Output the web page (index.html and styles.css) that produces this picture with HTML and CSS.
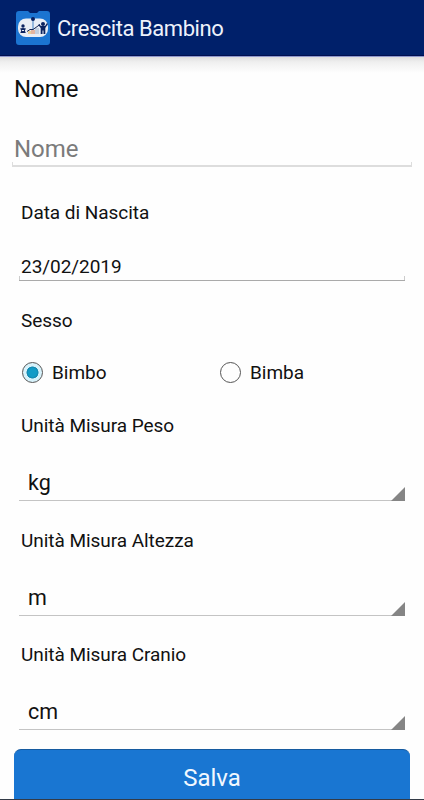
FILE: index.html
```
<!DOCTYPE html>
<html lang="it">
<head>
<meta charset="utf-8">
<title>Crescita Bambino</title>
<link rel="stylesheet" href="styles.css">
</head>
<body>
<div class="screen">
  <header class="bar">
    <svg class="logo" width="34" height="34" viewBox="0 0 34 34">
      <path d="M3 0H12L14 2H21L23 0H31Q34 0 34 3V31Q34 34 31 34H3Q0 34 0 31V3Q0 0 3 0Z" fill="#1b74d1"/>
      <rect x="2" y="7.500" width="30" height="18.500" rx="8" fill="#e9edf5"/>
      <path d="M12 20h3v3h-3z" fill="#e9cf9b"/>
      <path d="M15 19h4v4h-4z" fill="#e5b5a0"/>
      <path d="M19 17h4v6h-4z" fill="#c5d0e0"/>
      <path d="M17 8v11" stroke="#4482c4" stroke-width="1"/>
      <circle cx="17" cy="8" r="2" fill="#071f60"/>
      <path d="M11 20.500L14 18.500L17 18.500L24 13.500" stroke="#162653" stroke-width="1" fill="none"/>
      <g fill="#0c2360">
        <circle cx="7" cy="15" r="1.700"/>
        <path d="M4 17.500L7 17L10 17.500L8.800 19.500L9.800 22H4.300L5.300 19.500Z"/>
        <circle cx="27" cy="13" r="2"/>
        <path d="M23 13L25 15H29L31 12L32 13L29.300 17V23H27.500V19.500H26.500V23H24.700V17L22.300 14Z"/>
      </g>
      <path d="M6 19.500h2" stroke="#e9edf5"/>
    </svg>
    <h1 class="title">Crescita Bambino</h1>
  </header>
  <main class="form">
    <div class="name-label">Nome</div>
    <div class="name-input">Nome</div>
    <div class="fields">
      <div class="label label-date">Data di Nascita</div>
      <div class="date-input">23/02/2019</div>
      <div class="label label-sex">Sesso</div>
      <div class="radios">
        <div class="radio"><span class="dot dot-on"></span>Bimbo</div>
        <div class="radio"><span class="dot"></span>Bimba</div>
      </div>
      <div class="label label-weight">Unità Misura Peso</div>
      <div class="select">kg<svg class="corner" width="14" height="14"><path d="M14 0V14H0Z"/></svg></div>
      <div class="label label-unit">Unità Misura Altezza</div>
      <div class="select">m<svg class="corner" width="14" height="14"><path d="M14 0V14H0Z"/></svg></div>
      <div class="label label-last">Unità Misura Cranio</div>
      <div class="select">cm<svg class="corner" width="14" height="14"><path d="M14 0V14H0Z"/></svg></div>
    </div>
    <div class="save">Salva</div>
  </main>
  <div class="edge"></div>
</div>
</body>
</html>
```
FILE: styles.css
```
* { box-sizing: border-box; }
body { margin: 0; background: #fefefe; color: #111; font-family: Roboto, sans-serif; }
.screen { display: flex; flex-direction: column; height: 800px; overflow: hidden; }
.bar {
  flex: none; display: flex; align-items: center; height: 57px; padding: 0 16px 1px;
  background: #00206a; border-bottom: 1px solid #8f98cc; box-shadow: inset 0 -1px #000f50;
}
.logo { flex: none; margin-top: 1px; }
.title { margin: 3px 0 0 7px; color: #eef2fb; font-size: 22px; font-weight: 400; line-height: 28px; letter-spacing: -.45px; }
.form { flex: 1; min-height: 0; background: linear-gradient(#dedede, #efefef 5px, #fefefe 16px); }
.name-label { height: 64px; padding-left: 14px; font-size: 24px; line-height: 64px; }
.name-input {
  height: 46px; margin: 0 12px; padding-left: 2px; color: #7b7b7b; font-size: 24px; line-height: 57px;
  background:
    linear-gradient(#ddd, #ddd) 0 100% / 100% 2px no-repeat,
    linear-gradient(#ddd, #ddd) 0 100% / 1px 5px no-repeat,
    linear-gradient(#ddd, #ddd) 100% 100% / 1px 5px no-repeat;
}
.fields { padding: 34px 19px 0; }
.label { height: 24px; padding-left: 2px; font-size: 19px; line-height: 24px; letter-spacing: -.05px; }
.date-input {
  height: 30px; margin-top: 26px; padding-left: 2px; font-size: 19px; line-height: 32px; letter-spacing: -.05px;
  background:
    linear-gradient(#aaa, #aaa) 0 100% / 100% 1px no-repeat,
    linear-gradient(#ccc, #ccc) 0 100% / 1px 5px no-repeat,
    linear-gradient(#ccc, #ccc) 100% 100% / 1px 5px no-repeat;
}
.label-sex { margin-top: 28px; }
.radios { display: grid; grid-template-columns: 198px 1fr; height: 40px; margin-top: 19px; padding-left: 3px; }
.radio { display: flex; align-items: center; gap: 9px; font-size: 19px; }
.dot { width: 21px; height: 21px; border: 1px solid #555; border-radius: 50%; }
.dot-on { background: radial-gradient(circle, #119bc7 0 4px, #1386ad 5.700px, #d7f2fb 6.300px); }
.label-weight { margin-top: 22px; }
.select {
  display: flex; justify-content: space-between; align-items: flex-end; height: 36px; margin-top: 27px;
  padding-left: 9px; border-bottom: 1px solid #c4c4c4; font-size: 21.5px; line-height: 34px;
}
.corner { flex: none; margin-bottom: -1px; fill: #858585; }
.label-unit { margin-top: 28px; }
.label-last { margin-top: 27px; }
.save {
  height: 60px; margin: 19px 14px 0; border-top: 1px solid #155a9f; border-radius: 7px 7px 0 0;
  background: #1976d2; color: #f1f8ff; font-size: 24px; line-height: 57px; text-align: center;
}
.edge { flex: none; height: 1px; background: #333b47; }
```
